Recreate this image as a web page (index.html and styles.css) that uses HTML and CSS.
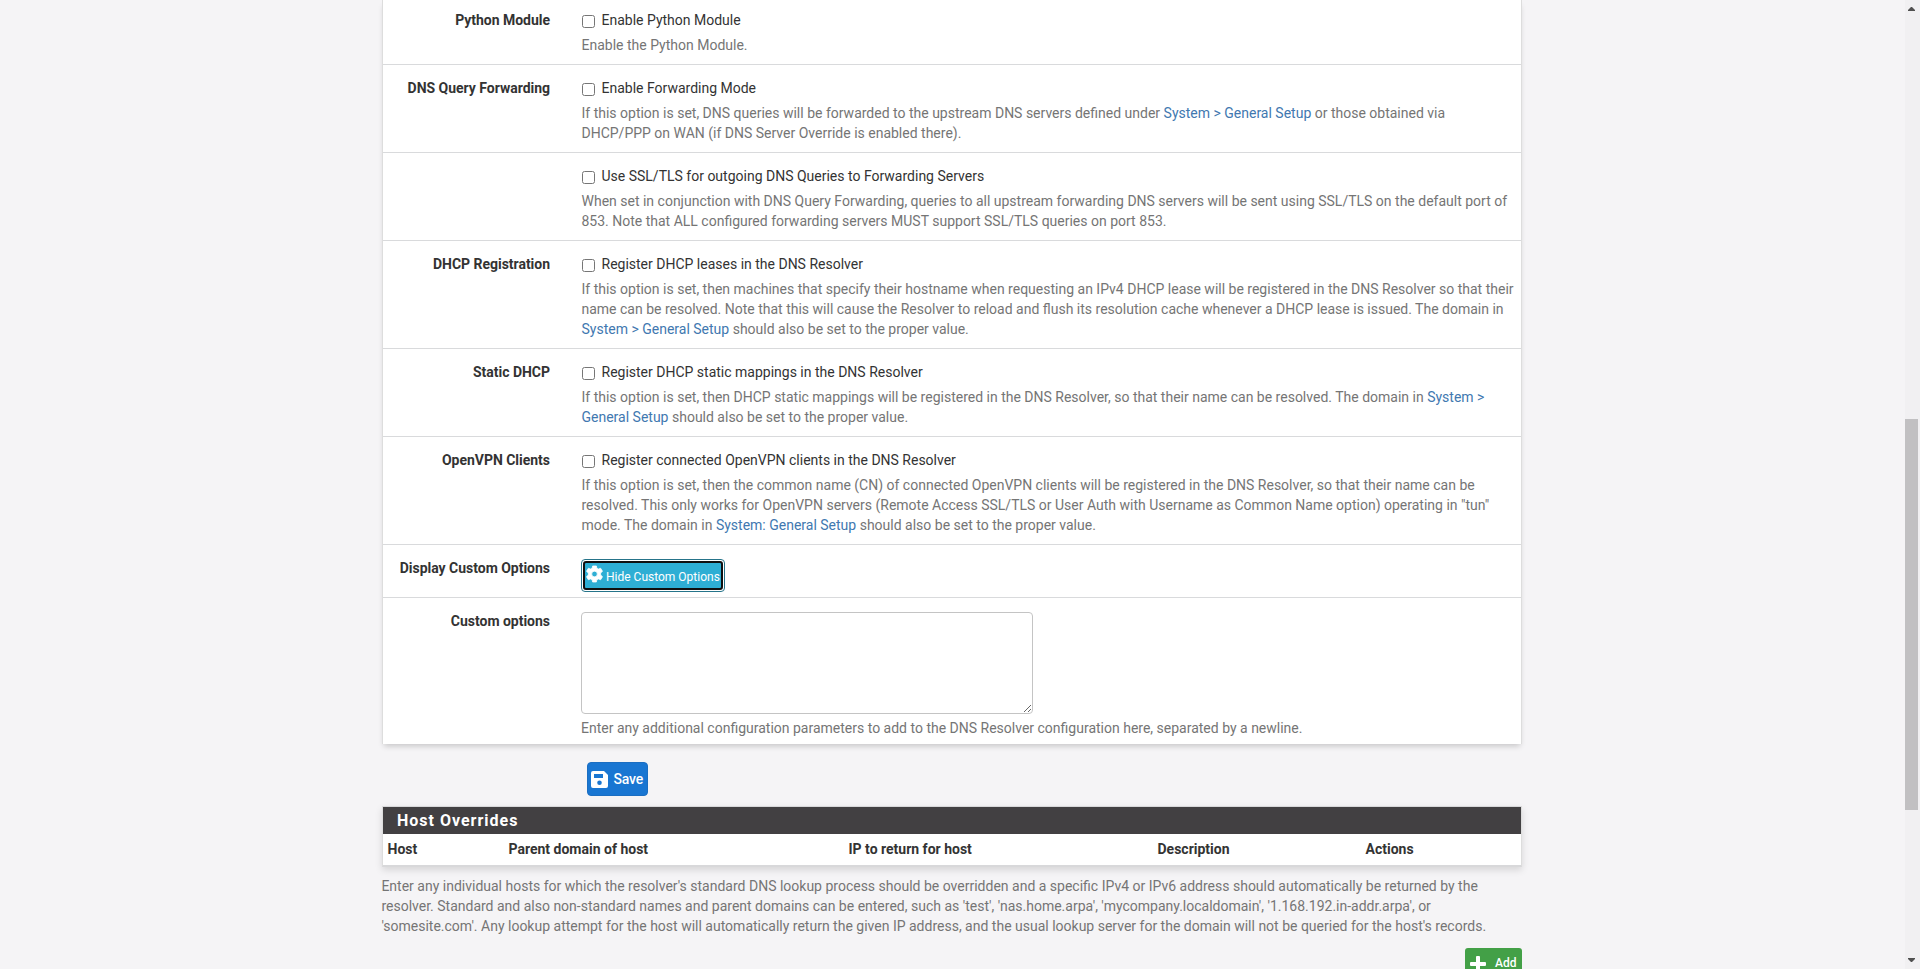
FILE: index.html
```html
<!DOCTYPE html>
<html lang="en">
<head>
<meta charset="utf-8">
<title>DNS Resolver: General Settings</title>
<link rel="stylesheet" href="styles.css">
</head>
<body>
<div class="viewport">
<main class="container">
  <form class="panel settings">
    <div class="row first">
      <div class="label">Python Module</div>
      <div class="field"><label class="check"><input type="checkbox">Enable Python Module</label>
        <p class="help">Enable the Python Module.</p></div>
    </div>
    <div class="row">
      <div class="label">DNS Query Forwarding</div>
      <div class="field"><label class="check"><input type="checkbox">Enable Forwarding Mode</label>
        <p class="help">If this option is set, DNS queries will be forwarded to the upstream DNS servers defined under <a>System &gt; General Setup</a> or those obtained via<br>DHCP/PPP on WAN (if DNS Server Override is enabled there).</p></div>
    </div>
    <div class="row">
      <div class="label"></div>
      <div class="field"><label class="check"><input type="checkbox">Use SSL/TLS for outgoing DNS Queries to Forwarding Servers</label>
        <p class="help">When set in conjunction with DNS Query Forwarding, queries to all upstream forwarding DNS servers will be sent using SSL/TLS on the default port of<br>853. Note that ALL configured forwarding servers MUST support SSL/TLS queries on port 853.</p></div>
    </div>
    <div class="row">
      <div class="label">DHCP Registration</div>
      <div class="field"><label class="check"><input type="checkbox">Register DHCP leases in the DNS Resolver</label>
        <p class="help">If this option is set, then machines that specify their hostname when requesting an IPv4 DHCP lease will be registered in the DNS Resolver so that their<br>name can be resolved. Note that this will cause the Resolver to reload and flush its resolution cache whenever a DHCP lease is issued. The domain in<br><a>System &gt; General Setup</a> should also be set to the proper value.</p></div>
    </div>
    <div class="row">
      <div class="label">Static DHCP</div>
      <div class="field"><label class="check"><input type="checkbox">Register DHCP static mappings in the DNS Resolver</label>
        <p class="help">If this option is set, then DHCP static mappings will be registered in the DNS Resolver, so that their name can be resolved. The domain in <a>System &gt;<br>General Setup</a> should also be set to the proper value.</p></div>
    </div>
    <div class="row">
      <div class="label">OpenVPN Clients</div>
      <div class="field"><label class="check"><input type="checkbox">Register connected OpenVPN clients in the DNS Resolver</label>
        <p class="help">If this option is set, then the common name (CN) of connected OpenVPN clients will be registered in the DNS Resolver, so that their name can be<br>resolved. This only works for OpenVPN servers (Remote Access SSL/TLS or User Auth with Username as Common Name option) operating in "tun"<br>mode. The domain in <a>System: General Setup</a> should also be set to the proper value.</p></div>
    </div>
    <div class="row toggle">
      <div class="label">Display Custom Options</div>
      <div class="field"><button type="button" class="btn-info"><span class="ring"><svg class="gear" viewBox="0 0 18 18"><path fill="#fff" stroke="#fff" stroke-width=".8" stroke-linejoin="round" fill-rule="evenodd" d="M7 .5h4l.5 2.400 1.600.9 2.400-.9 2 3.300-2 1.700v2.200l2 1.700-2 3.300-2.400-.9-1.600.9-.5 2.400H7l-.5-2.400-1.600-.9-2.400.9-2-3.300 2-1.700V7.900l-2-1.700 2-3.300 2.400.9 1.600-.9zM9 6a3 3 0 1 0 0 6 3 3 0 0 0 0-6z"/></svg><span>Hide Custom Options</span></span></button></div>
    </div>
    <div class="row custom">
      <div class="label">Custom options</div>
      <div class="field"><textarea class="options"></textarea>
        <p class="help">Enter any additional configuration parameters to add to the DNS Resolver configuration here, separated by a newline.</p></div>
    </div>
  </form>

  <button type="button" class="btn-save"><svg class="disk" viewBox="0 0 17 17"><path fill="#fff" fill-rule="evenodd" d="M2 0h11l4 4v11a2 2 0 0 1-2 2H2a2 2 0 0 1-2-2V2a2 2 0 0 1 2-2zM3 3v4h9V3zM8.500 9.500a2.300 2.300 0 1 0 0 4.600 2.300 2.300 0 0 0 0-4.600z"/></svg><span>Save</span></button>

  <section class="panel hosts">
    <h2>Host Overrides</h2>
    <div class="heads"><span>Host</span><span>Parent domain of host</span><span>IP to return for host</span><span>Description</span><span>Actions</span></div>
  </section>
  <p class="note">Enter any individual hosts for which the resolver's standard DNS lookup process should be overridden and a specific IPv4 or IPv6 address should automatically be returned by the<br>resolver. Standard and also non-standard names and parent domains can be entered, such as 'test', 'nas.home.arpa', 'mycompany.localdomain', '1.168.192.in-addr.arpa', or<br>'somesite.com'. Any lookup attempt for the host will automatically return the given IP address, and the usual lookup server for the domain will not be queried for the host's records.</p>
  <button type="button" class="btn-add"><svg class="plus" viewBox="0 0 16 16"><path fill="#fff" d="M6 1q0-1 1-1h2q1 0 1 1v5h5q1 0 1 1v2q0 1-1 1h-5v5q0 1-1 1H7q-1 0-1-1v-5H1q-1 0-1-1V7q0-1 1-1h5z"/></svg><span>Add</span></button>
</main>
<div class="scrollbar"><svg class="arrow" viewBox="0 0 7 4"><path fill="#505050" d="M3 0h1l3 3v1H0V3z"/></svg><div class="thumb"></div><svg class="arrow down" viewBox="0 0 7 4"><path fill="#505050" d="M0 0h7v1L4 4H3L0 1z"/></svg></div>
</div>
</body>
</html>
```
FILE: styles.css
```css
* { box-sizing: border-box; }
body {
  margin: 0;
  overflow: hidden;
  background: #f5f4f6;
  color: #333;
  font: 14px/20px Roboto, "Liberation Sans", sans-serif;
}
.viewport {
  display: grid;
  grid-template-columns: 382px 1140px 1fr 15px;
  grid-template-rows: 100vh;
  height: 100vh;
  overflow: hidden;
}
.container { grid-column: 2; display: flex; flex-direction: column; }
.panel { flex: none; background: #fff; border: 1px solid #ddd; }
.settings { border-top: 0; border-bottom: 0; box-shadow: 0 4px 6px -2px rgba(0, 0, 0, .2); }
.row {
  display: grid;
  grid-template-columns: 167px 1fr;
  column-gap: 31.500px;
  padding: 13px 0 9px;
  border-bottom: 1px solid #d9dadc;
}
.first { padding-top: 10px; }
.label { text-align: right; font-weight: 700; letter-spacing: -.02px; }
.check { display: flex; align-items: center; gap: 7px; }
.check input { width: 13px; height: 13px; margin: 2px 0 0; }
.help { margin: 5px 0 0; color: #757575; white-space: nowrap; }
a { color: #4178b0; }
.toggle { height: 53px; padding-bottom: 0; column-gap: 31px; }
.btn-info {
  display: block;
  width: 144px;
  height: 33px;
  margin-top: 1px;
  padding: 1px;
  border: 1px solid #26748a;
  border-radius: 4px;
  background: #fff;
  color: #fff;
}
.ring {
  display: flex;
  align-items: center;
  gap: 3px;
  height: 29px;
  padding-left: 1px;
  border: 2px solid #101010;
  border-radius: 3px;
  background: #2eaed4;
  font: 12px/18px Roboto, sans-serif;
  white-space: nowrap;
}
.ring span { margin-top: 3px; }
.gear { width: 17px; height: 18px; margin-top: -3px; flex: none; }
.custom { padding-bottom: 0; border-bottom: 0; column-gap: 31px; height: 146px; }
.options {
  display: block;
  width: 452px;
  height: 102px;
  margin: 1px 0 0;
  border: 1px solid #c4c4c4;
  border-radius: 4px;
  background: #fff;
}
.custom .help { margin-top: 4px; }
.btn-save {
  display: flex;
  align-items: center;
  flex: none;
  gap: 5.500px;
  width: 61px;
  height: 34px;
  margin: 18px 0 10px 205px;
  padding: 0 0 1px 3px;
  border: 1px solid #1b6ec2;
  border-radius: 4px;
  background: #1976d2;
  color: #fff;
  font: 500 14px/20px Roboto, sans-serif;
  letter-spacing: -.2px;
}
.disk { width: 17px; height: 17px; margin-top: 1px; flex: none; }
.hosts { border-top-color: #d8d8da; border-bottom: 2px solid #d8d8da; box-shadow: 0 3px 7px rgba(0, 0, 0, .13); }
.hosts h2 {
  height: 27px;
  margin: 0;
  padding-left: 14px;
  background: #424042;
  color: #fff;
  font-size: 16px;
  line-height: 27px;
  letter-spacing: 1px;
}
.heads {
  display: grid;
  grid-template-columns: 121px 340px 309px 208px 1fr;
  height: 31px;
  padding-left: 4.500px;
  font-weight: 700;
  line-height: 30px;
}
.note { margin: 9px 0 12px -.6px; color: #757575; white-space: nowrap; flex: none; }
.btn-add {
  align-self: flex-end;
  display: flex;
  align-items: center;
  flex: none;
  gap: 9px;
  width: 57px;
  height: 31px;
  padding: 0 0 0 5px;
  border: 0;
  border-radius: 3px;
  background: #43a047;
  color: #fff;
  font: 500 12px/18px Roboto, sans-serif;
}
.btn-add span { margin-top: -1px; }
.plus { width: 16px; height: 16px; flex: none; }
.scrollbar {
  grid-column: 4;
  display: flex;
  flex-direction: column;
  align-items: center;
  padding: 7px 2px 7px 0;
  background: #f1f0f2;
}
.thumb { flex: none; width: 13px; height: 391px; margin-top: 408px; background: #c1c0c2; }
.arrow { width: 7px; height: 4px; flex: none; }
.down { margin-top: auto; }
```
